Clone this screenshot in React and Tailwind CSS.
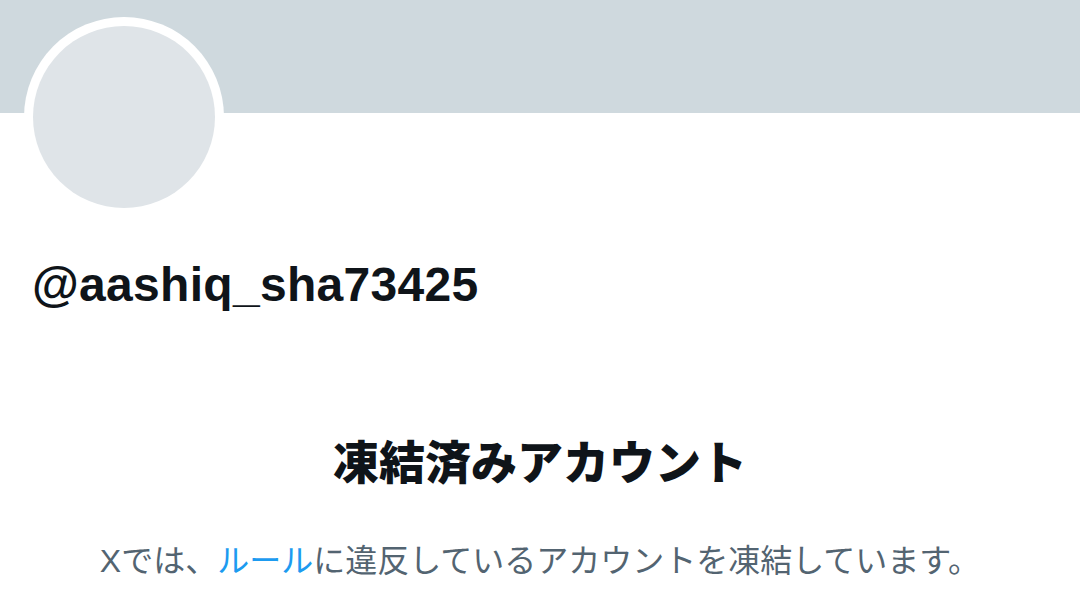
import React from 'react';

const App = () => {
    return (
        <div
            className="w-[1080px] h-[608px] overflow-hidden bg-white flex flex-col"
            style={{ fontFamily: '"Liberation Sans", "Noto Sans CJK JP", sans-serif' }}
        >
            <div className="h-[113px] w-full bg-[#cfd9de] shrink-0" />

            <div className="-mt-[96px] ml-[24px] w-[200px] h-[200px] rounded-full bg-white p-[9px] shrink-0">
                <div className="w-full h-full rounded-full bg-[#dfe4e8]" />
            </div>

            <div className="ml-[32px] mt-[40px] text-[48px] leading-[56px] font-bold tracking-[0.3px] text-[#0f1419]">
                @aashiq_sha73425
            </div>

            <div className="flex flex-col items-center mt-[122px]">
                <h1 className="text-[46px] leading-[56px] font-black text-[#0f1419]">凍結済みアカウント</h1>
                <p className="mt-[50px] text-[32px] leading-[40px] text-[#536471]">
                    Xでは、<span className="text-[#1d9bf0]">ルール</span>に違反しているアカウントを凍結しています。
                </p>
            </div>
        </div>
    );
};

export default App;
